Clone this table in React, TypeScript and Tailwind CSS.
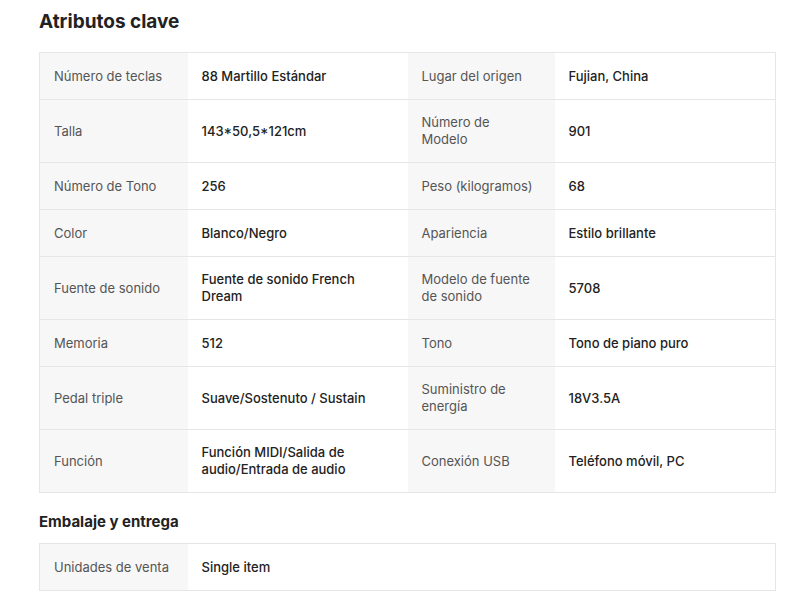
const attrs: [string, string, string, string][] = [
  ['Número de teclas', '88 Martillo Estándar', 'Lugar del origen', 'Fujian, China'],
  ['Talla', '143*50,5*121cm', 'Número de Modelo', '901'],
  ['Número de Tono', '256', 'Peso (kilogramos)', '68'],
  ['Color', 'Blanco/Negro', 'Apariencia', 'Estilo brillante'],
  ['Fuente de sonido', 'Fuente de sonido French Dream', 'Modelo de fuente de sonido', '5708'],
  ['Memoria', '512', 'Tono', 'Tono de piano puro'],
  ['Pedal triple', 'Suave/Sostenuto / Sustain', 'Suministro de energía', '18V3.5A'],
  ['Función', 'Función MIDI/Salida de audio/Entrada de audio', 'Conexión USB', 'Teléfono móvil, PC'],
];

function Label({ children, narrow }: { children: React.ReactNode; narrow?: boolean }) {
  return (
    <td
      className={
        narrow
          ? 'h-[47px] bg-[#f7f7f7] pl-[14px] pr-[18px] py-[14px] align-middle text-[13px] leading-[17px] text-[#555]'
          : 'h-[47px] bg-[#f7f7f7] px-[14px] py-[14px] align-middle text-[13px] leading-[17px] text-[#555]'
      }
    >
      {children}
    </td>
  );
}

function Value({ children }: { children: React.ReactNode }) {
  return (
    <td className="h-[47px] bg-white pl-[14px] pr-[20px] py-[14px] align-middle text-[13px] leading-[17px] font-medium text-[#222]">
      {children}
    </td>
  );
}

export default function App() {
  return (
    <div className="min-h-screen bg-white pl-[39px] pt-[10px] font-['Inter',sans-serif]">
      <h2 className="text-[19px] leading-[24px] font-bold text-[#222]">Atributos clave</h2>

      <table className="mt-[18px] w-[737px] table-fixed border-collapse border border-[#e6e6e6]">
        <colgroup>
          <col className="w-[148px]" />
          <col className="w-[220px]" />
          <col className="w-[147px]" />
          <col />
        </colgroup>
        <tbody>
          {attrs.map((r) => (
            <tr key={r[0]} className="border-b border-[#e6e6e6]">
              <Label>{r[0]}</Label>
              <Value>{r[1]}</Value>
              <Label narrow>{r[2]}</Label>
              <Value>{r[3]}</Value>
            </tr>
          ))}
        </tbody>
      </table>

      <h3 className="mt-[19px] text-[15px] leading-[20px] font-bold text-[#222]">Embalaje y entrega</h3>

      <table className="mt-[11px] w-[737px] table-fixed border-collapse border border-[#e6e6e6]">
        <colgroup>
          <col className="w-[148px]" />
          <col />
        </colgroup>
        <tbody>
          <tr>
            <Label>Unidades de venta</Label>
            <Value>Single item</Value>
          </tr>
        </tbody>
      </table>
    </div>
  );
}
